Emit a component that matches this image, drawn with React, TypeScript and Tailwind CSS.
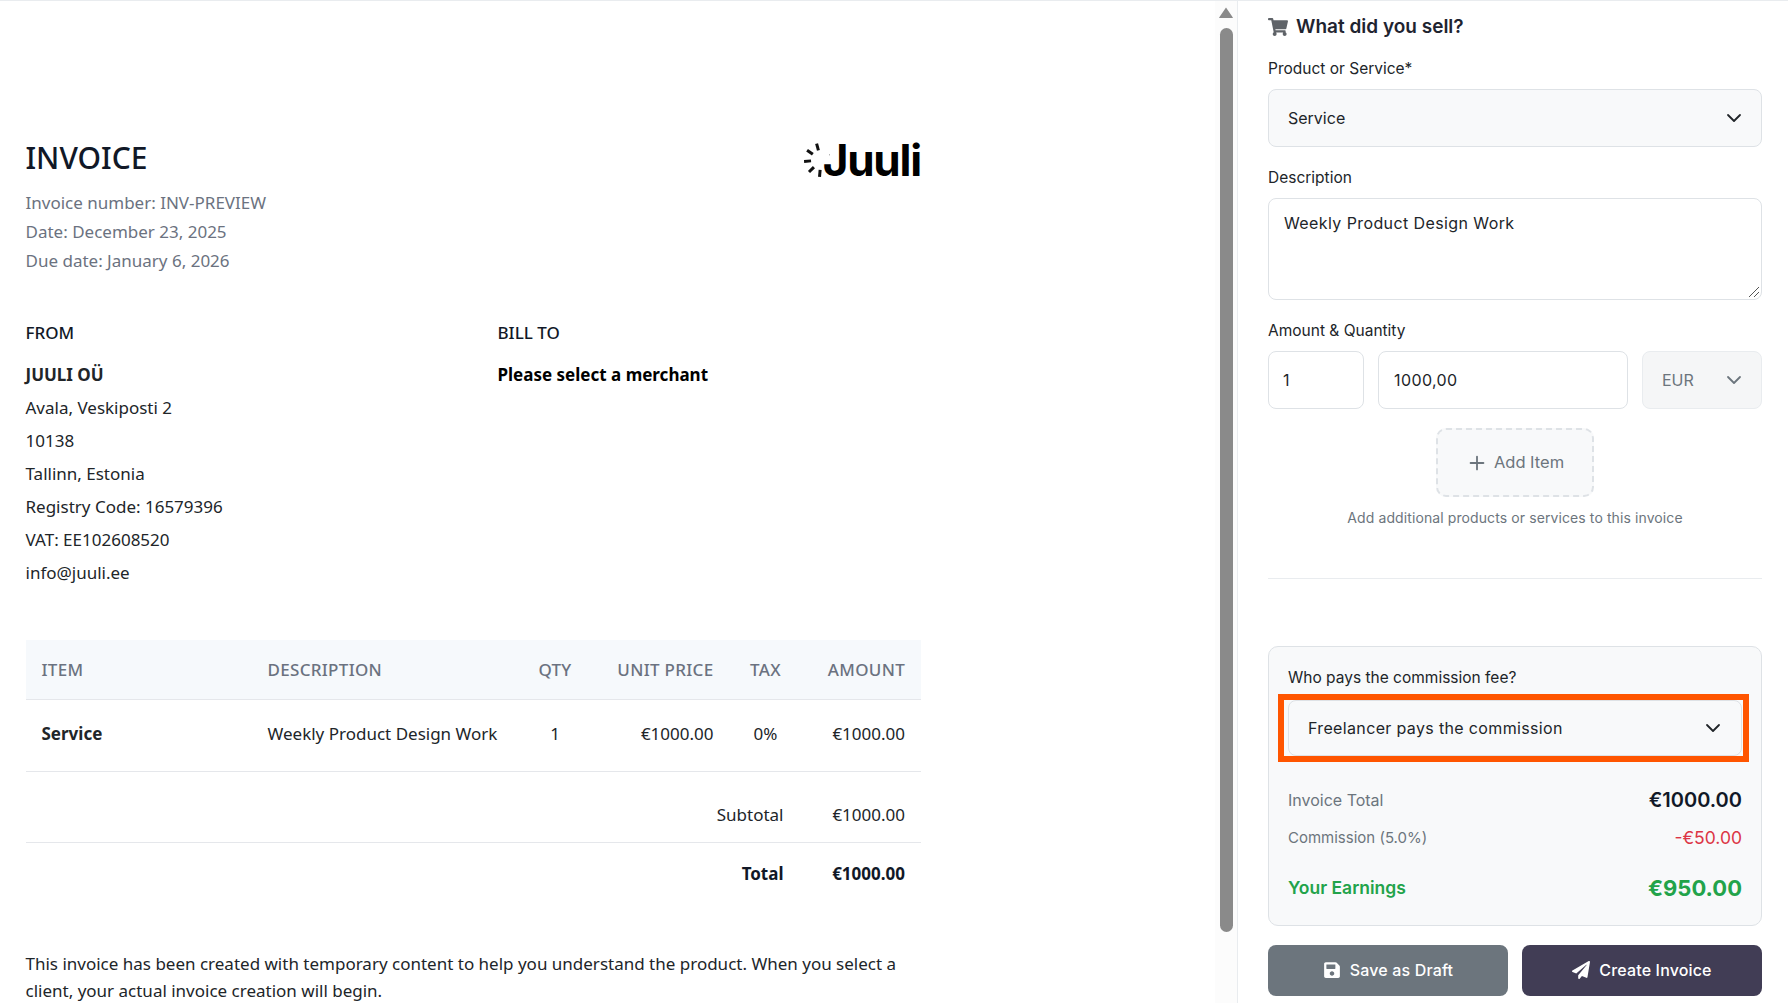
import { ChevronDown, Plus } from "lucide-react";
import { FaPaperPlane, FaSave, FaShoppingCart } from "react-icons/fa";

const fromLines = ["Avala, Veskiposti 2", "10138", "Tallinn, Estonia", "Registry Code: 16579396", "VAT: EE102608520", "info@juuli.ee"];

function Logo() {
  const ticks = [0, 40, 80, 120, 160, 200, 240, 280];
  return (
    <div className="flex items-center mt-[5px]">
      <svg width="26" height="36" viewBox="0 0 26 36" className="mr-[-7px]">
        {ticks.map((a) => (
          <rect key={a} x="15.5" y="1" width="3" height="7" fill="#111" transform={`rotate(${-a - 15} 17 18)`} />
        ))}
      </svg>
      <span className="font-['Inter',sans-serif] font-bold text-[44px] leading-[40px] tracking-[-1.2px] text-black">Juuli</span>
    </div>
  );
}

function InvoicePreview() {
  return (
    <div className="w-[1215px] shrink-0 pl-[25.5px]">
      <div className="w-[895.5px] font-['Noto_Sans',sans-serif] text-[17px] leading-[29px] text-[#212529]">
        <div className="mt-[136px] h-[40px] flex items-center justify-between">
          <h1 className="text-[30px] font-medium text-[#111827]">INVOICE</h1>
          <Logo />
        </div>
        <div className="mt-[11px] text-[#6b7280]">
          <p>Invoice number: INV-PREVIEW</p>
          <p>Date: December 23, 2025</p>
          <p>Due date: January 6, 2026</p>
        </div>

        <div className="mt-[43px] flex">
          <div className="w-[472px]">
            <h2 className="font-medium text-[#111827]">FROM</h2>
            <p className="mt-[13px] mb-[4px] font-bold">JUULI OÜ</p>
            {fromLines.map((line) => (
              <p key={line} className="mb-[4px]">{line}</p>
            ))}
          </div>
          <div>
            <h2 className="font-medium text-[#111827]">BILL TO</h2>
            <p className="mt-[13px] font-bold text-black">Please select a merchant</p>
          </div>
        </div>

        <table className="mt-[49px] w-full table-fixed border-collapse">
          <colgroup>
            <col className="w-[225px]" />
            <col className="w-[272px]" />
            <col className="w-[65px]" />
            <col className="w-[142px]" />
            <col className="w-[72px]" />
            <col className="w-[119.5px]" />
          </colgroup>
          <thead>
            <tr className="h-[59px] bg-[#f6f9fc] border-b border-[#e5e7eb] text-[#6b7280] tracking-[0.3px]">
              <th className="px-[16px] text-left font-medium">ITEM</th>
              <th className="px-[17px] text-left font-medium">DESCRIPTION</th>
              <th className="text-center font-medium">QTY</th>
              <th className="pr-[16px] text-right font-medium">UNIT PRICE</th>
              <th className="text-center font-medium">TAX</th>
              <th className="pr-[16px] text-right font-medium">AMOUNT</th>
            </tr>
          </thead>
          <tbody>
            <tr className="h-[72px] border-b border-[#e5e7eb]">
              <td className="px-[16px] pb-[3px] font-bold">Service</td>
              <td className="pl-[17px] pb-[3px] whitespace-nowrap">Weekly Product Design Work</td>
              <td className="pb-[3px] text-center">1</td>
              <td className="pr-[16px] pb-[3px] text-right">€1000.00</td>
              <td className="pb-[3px] text-center">0%</td>
              <td className="pr-[16px] pb-[3px] text-right">€1000.00</td>
            </tr>
            <tr className="h-[71px] border-b border-[#e5e7eb]">
              <td colSpan={5} className="pt-[16px] pr-[18px] text-right">Subtotal</td>
              <td className="pt-[16px] pr-[16px] text-right">€1000.00</td>
            </tr>
            <tr className="h-[62px] font-bold text-[#111827]">
              <td colSpan={5} className="pr-[18px] text-right">Total</td>
              <td className="pr-[16px] text-right">€1000.00</td>
            </tr>
          </tbody>
        </table>

        <p className="mt-[46px] leading-[27px]">
          This invoice has been created with temporary content to help you understand the product. When you select a client, your actual invoice creation will begin.
        </p>
      </div>
    </div>
  );
}

function FakeScrollbar() {
  return (
    <div className="w-[23px] shrink-0 bg-[#fcfcfc] border-r border-[#e9ecef] flex flex-col items-center">
      <svg width="14" height="11" viewBox="0 0 14 11" className="mt-[6px]">
        <path d="M7 0.5 13.5 10a.5.5 0 0 1-.5 1H1a.5.5 0 0 1-.5-1Z" fill="#8a8a8a" />
      </svg>
      <div className="mt-[10px] w-[13px] h-[904px] rounded-full bg-[#8a8a8a]" />
    </div>
  );
}

function SelectBox({ label, className }: { label: string; className: string }) {
  return (
    <div className={`flex items-center justify-between border rounded-[8px] ${className}`}>
      <span>{label}</span>
      <ChevronDown size={24} strokeWidth={1.8} />
    </div>
  );
}

function SalePanel() {
  return (
    <div className="w-[494px] ml-[30px] shrink-0 font-['Inter',sans-serif] text-[16px] text-[#212529]">
      <div className="mt-[12px] h-[28px] flex items-center gap-[8px]">
        <FaShoppingCart size={20} className="text-[#5f6368]" />
        <h2 className="text-[19px] font-semibold text-[#1f2430]">What did you sell?</h2>
      </div>

      <label className="block mt-[18px] text-[15.5px] leading-[20px]">Product or Service*</label>
      <SelectBox label="Service" className="mt-[10px] h-[58px] pl-[19px] pr-[15px] bg-[#f8f9fa] border-[#dee2e6]" />

      <label className="block mt-[21px] text-[15.5px] leading-[20px]">Description</label>
      <div className="relative mt-[10px]">
        <textarea
          defaultValue="Weekly Product Design Work"
          className="block w-full h-[102px] px-[15px] py-[12px] leading-[24px] tracking-[0.4px] resize-none rounded-[8px] border border-[#dee2e6] outline-none"
        />
        <svg width="12" height="12" viewBox="0 0 12 12" className="absolute right-[2px] bottom-[2px] pointer-events-none">
          <path d="M1 11 11 1M6 11l5-5" stroke="#555" strokeWidth="1" fill="none" />
        </svg>
      </div>

      <label className="block mt-[21px] text-[15.5px] leading-[20px]">Amount &amp; Quantity</label>
      <div className="mt-[10px] flex h-[58px] gap-[14px]">
        <div className="w-[96px] pl-[14px] flex items-center rounded-[8px] border border-[#dee2e6]">1</div>
        <div className="w-[250px] pl-[15px] flex items-center tracking-[0.4px] rounded-[8px] border border-[#dee2e6]">1000,00</div>
        <SelectBox label="EUR" className="flex-1 pl-[19px] pr-[15px] bg-[#f5f6f7] border-[#e9ecef] text-[#6c757d]" />
      </div>

      <div className="mt-[19px] mx-auto w-[158px] h-[69px] flex items-center justify-center gap-[6px] bg-[#f8f9fa] border-2 border-dashed border-[#dee2e6] rounded-[10px] text-[#6c757d]">
        <Plus size={22} />
        <span className="text-[16.5px]">Add Item</span>
      </div>
      <p className="mt-[11px] text-center text-[14px] tracking-[0.1px] leading-[20px] text-[#6c757d]">Add additional products or services to this invoice</p>

      <div className="mt-[50px] border-t border-[#e9ecef]" />

      <div className="mt-[67px] h-[280px] px-[19px] pt-[21px] bg-[#f8f9fa] border border-[#dee2e6] rounded-[10px]">
        <label className="block text-[15.5px] leading-[20px]">Who pays the commission fee?</label>
        <div className="relative mt-[12px]">
          <SelectBox label="Freelancer pays the commission" className="h-[56px] pl-[19px] pr-[16px] pb-[1px] border-[#dee2e6] tracking-[0.35px]" />
          <div className="absolute -left-[10px] -right-[7px] -top-[6px] -bottom-[6px] border-[6px] border-[#ff5500]" />
        </div>
        <div className="mt-[32px] h-[24px] flex items-center justify-between">
          <span className="text-[#6c757d]">Invoice Total</span>
          <span className="text-[20px] font-semibold text-[#111827]">€1000.00</span>
        </div>
        <div className="mt-[14px] h-[24px] flex items-center justify-between">
          <span className="text-[#6c757d] text-[15px]">Commission (5.0%)</span>
          <span className="text-[#dc3545] text-[17.5px]">-€50.00</span>
        </div>
        <div className="mt-[24px] h-[28px] flex items-center justify-between text-[#22a34a]">
          <span className="font-semibold text-[17.5px]">Your Earnings</span>
          <span className="text-[22px] font-bold">€950.00</span>
        </div>
      </div>

      <div className="mt-[19px] flex gap-[14px] h-[51px] pb-0 text-white font-medium tracking-[0.15px]">
        <button className="flex-1 flex items-center justify-center gap-[9px] pb-[1px] rounded-[8px] bg-[#6c757d]">
          <FaSave size={18} />
          Save as Draft
        </button>
        <button className="flex-1 flex items-center justify-center gap-[9px] pb-[1px] rounded-[8px] bg-[#413d55]">
          <FaPaperPlane size={18} />
          Create Invoice
        </button>
      </div>
    </div>
  );
}

export default function App() {
  return (
    <div className="h-screen w-full overflow-hidden bg-white border-t border-[#e9ecef] flex">
      <InvoicePreview />
      <FakeScrollbar />
      <SalePanel />
    </div>
  );
}
